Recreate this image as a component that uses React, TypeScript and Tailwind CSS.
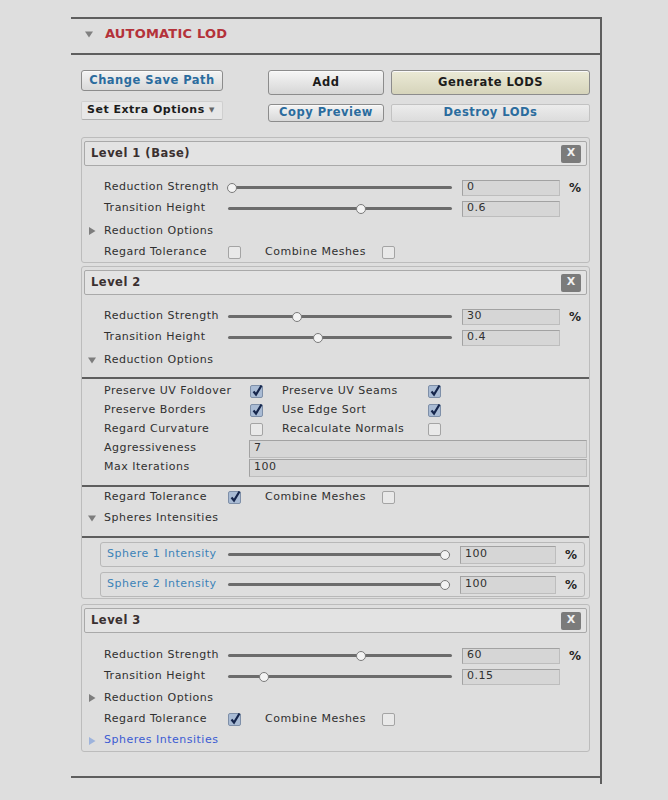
import React from 'react'

// Inspector panel for the automatic LOD generator

function Caret({ open, color = '#7d7d7d' }: { open?: boolean; color?: string }) {
  return (
    <svg width="8" height="8" viewBox="0 0 8 8" className="shrink-0">
      {open ? <path d="M0 1.5h8L4 7.5z" fill={color} /> : <path d="M1 0v8l6.5-4z" fill={color} />}
    </svg>
  )
}

function Check({ on }: { on?: boolean }) {
  if (!on) return <span className="h-[13px] w-[13px] shrink-0 rounded-[2px] border border-[#a4a4a4] bg-[#e9e9e9]" />
  return (
    <span className="relative flex h-[13px] w-[13px] shrink-0 items-center justify-center rounded-[2px] border border-[#7e8fa8] bg-[#a9bbd4]">
      <svg width="12" height="13" viewBox="0 0 12 13" className="absolute -top-[2px] left-0">
        <path d="M2.5 7.5l2.5 3L10.5 1.5" fill="none" stroke="#16264c" strokeWidth="2.2" />
      </svg>
    </span>
  )
}

function Field({ value, className = '' }: { value: string; className?: string }) {
  return (
    <div className={`flex items-center border border-[#a2a2a2] border-b-[#bdbdbd] border-r-[#bdbdbd] bg-[#d6d6d6] pl-[4px] text-[#303030] ${className}`}>
      {value}
    </div>
  )
}

function Slider({ pos, w = 224, travel = 215 }: { pos: number; w?: number; travel?: number }) {
  return (
    <div className="relative flex h-[12px] shrink-0 items-center" style={{ width: w }}>
      <div className="h-[3px] w-full rounded-full bg-[#6c6c6c]" />
      <div
        className="absolute top-[1px] h-[10px] w-[10px] rounded-full border border-[#7a7a7a] bg-[#f3f3f3]"
        style={{ left: 4 + pos * travel - 5 }}
      />
    </div>
  )
}

function SliderRow({ label, pos, value, pct, className = 'h-[21px]' }: { label: string; pos: number; value: string; pct?: boolean; className?: string }) {
  return (
    <div className={`flex items-center ${className}`}>
      <span className="w-[124px] shrink-0">{label}</span>
      <Slider pos={pos} />
      <Field value={value} className="ml-[10px] h-[16px] w-[98px]" />
      {pct && <span className="ml-[9px] text-[12px] font-bold text-[#222]">%</span>}
    </div>
  )
}

function Foldout({ label, open, link, className = 'h-[22px]' }: { label: string; open?: boolean; link?: boolean; className?: string }) {
  return (
    <div className={`-ml-[16px] flex items-center gap-[8px] ${className}`}>
      <Caret open={open} color={link ? '#9db3dc' : '#7d7d7d'} />
      <span className={link ? 'text-[#3b5bd3]' : ''}>{label}</span>
    </div>
  )
}

function ToggleRow({ tolerance, className = 'h-[20px]' }: { tolerance?: boolean; className?: string }) {
  return (
    <div className={`flex items-center ${className}`}>
      <span className="w-[124px]">Regard Tolerance</span>
      <Check on={tolerance} />
      <span className="ml-[24px] w-[117px]">Combine Meshes</span>
      <Check />
    </div>
  )
}

function LevelHeader({ title }: { title: string }) {
  return (
    <div className="mx-[2px] flex h-[25px] items-center justify-between rounded-[2px] border border-[#a9a9a9] bg-[#e3e3e3] pl-[6px] pr-[5px]">
      <span className="text-[11.5px] font-bold text-[#3a3030]">{title}</span>
      <span className="flex h-[18px] w-[20px] items-center justify-center rounded-[2px] bg-[#7b7b7b] text-[11px] font-bold tracking-normal text-[#f0f0f0]">X</span>
    </div>
  )
}

function Level({ children, className = '' }: { children: React.ReactNode; className?: string }) {
  return <div className={`rounded-[3px] border border-[#bcbcbc] pt-[3px] ${className}`}>{children}</div>
}

function OptionRow({ a, aOn, b, bOn, className = 'h-[19px]' }: { a: string; aOn?: boolean; b: string; bOn?: boolean; className?: string }) {
  return (
    <div className={`flex items-center ${className}`}>
      <span className="w-[146px]">{a}</span>
      <Check on={aOn} />
      <span className="ml-[19px] w-[146px]">{b}</span>
      <Check on={bOn} />
    </div>
  )
}

function SphereRow({ label, className = '' }: { label: string; className?: string }) {
  return (
    <div className={`ml-[18px] mr-[4px] flex h-[25px] items-center rounded-[3px] border border-[#b8b8b8] pl-[6px] ${className}`}>
      <span className="w-[121px] text-[#3c82b8]">{label}</span>
      <Slider pos={1} w={222} travel={213} />
      <Field value="100" className="ml-[10px] h-[18px] w-[96px]" />
      <span className="ml-[9px] text-[12px] font-bold text-[#222]">%</span>
    </div>
  )
}

const btn = 'flex items-center justify-center whitespace-nowrap rounded-[3px] border border-[#8c8c8c] text-[11.5px] font-bold shadow-[inset_0_1px_0_#fafafa]'

export default function App() {
  return (
    <div className="min-h-[800px] bg-[#dedede] pt-[17px] font-['DejaVu_Sans',Verdana,sans-serif] text-[11px] tracking-[0.5px] text-[#303030]">
      <div className="ml-[71px] w-[531px] border-r-2 border-t-2 border-[#5e5e5e] pb-[6px]">
        <div className="border-b-2 border-[#5e5e5e] pb-[24px]">
          {/* panel title */}
          <div className="flex h-[36px] items-center gap-[12px] border-b-2 border-[#5e5e5e] pb-[4px] pl-[14px]">
            <Caret open color="#808080" />
            <span className="text-[13px] font-bold tracking-[0.2px] text-[#b4323a]">AUTOMATIC LOD</span>
          </div>

          <div className="pl-[10px] pr-[10px]">
            {/* toolbar */}
            <div className="flex pt-[15px]">
              <div className="flex w-[142px] flex-col">
                <div className={`${btn} h-[21px] bg-gradient-to-b from-[#f4f4f4] to-[#d9d9d9] text-[#2b6c9e]`}>Change Save Path</div>
                <div className="mt-[10px] flex h-[19px] items-center justify-between whitespace-nowrap rounded-[2px] border border-[#cfcfcf] border-b-[#b0b0b0] bg-[#e7e7e7] pl-[5px] pr-[7px] font-bold text-[#1c1c1c]">
                  <span>Set Extra Options</span>
                  <span className="text-[7px] text-[#666]">▼</span>
                </div>
              </div>
              <div className="ml-[45px] flex flex-1 flex-col">
                <div className="flex gap-[7px]">
                  <div className={`${btn} h-[25px] w-[116px] bg-gradient-to-b from-[#f6f6f6] to-[#d6d6d6] text-[#1c1c1c]`}>Add</div>
                  <div className={`${btn} h-[25px] flex-1 bg-gradient-to-b from-[#ebead6] to-[#d6d4bb] text-[#1c1c1c] shadow-[inset_0_1px_0_#f6f5e6]`}>Generate LODS</div>
                </div>
                <div className="mt-[9px] flex gap-[7px]">
                  <div className={`${btn} h-[18px] w-[116px] bg-gradient-to-b from-[#f4f4f4] to-[#d9d9d9] text-[#2b6c9e]`}>Copy Preview</div>
                  <div className="flex h-[18px] flex-1 items-center justify-center rounded-[2px] border border-[#c2c2c2] bg-gradient-to-b from-[#ececec] to-[#dcdcdc] text-[11.5px] font-bold text-[#2b6c9e]">Destroy LODs</div>
                </div>
              </div>
            </div>

            {/* level 1 */}
            <Level className="mt-[15px]">
              <LevelHeader title="Level 1 (Base)" />
              <div className="pl-[22px] pt-[11px]">
                <SliderRow label="Reduction Strength" pos={0} value="0" pct />
                <SliderRow label="Transition Height" pos={0.6} value="0.6" />
                <Foldout label="Reduction Options" className="mt-[1px] h-[22px]" />
                <ToggleRow />
              </div>
            </Level>

            {/* level 2 */}
            <Level className="mt-[3px]">
              <LevelHeader title="Level 2" />
              <div className="pl-[22px] pt-[11px]">
                <SliderRow label="Reduction Strength" pos={0.3} value="30" pct />
                <SliderRow label="Transition Height" pos={0.4} value="0.4" />
                <Foldout label="Reduction Options" open className="mt-[1px] h-[22px]" />
              </div>
              <div className="mt-[6px] border-t-2 border-[#5e5e5e] pl-[22px] pt-[2px]">
                <OptionRow a="Preserve UV Foldover" aOn b="Preserve UV Seams" bOn className="h-[20px]" />
                <OptionRow a="Preserve Borders" aOn b="Use Edge Sort" bOn />
                <OptionRow a="Regard Curvature" b="Recalculate Normals" />
                <div className="flex h-[19px] items-center">
                  <span className="w-[145px] shrink-0">Aggressiveness</span>
                  <Field value="7" className="mr-[2px] h-[18px] flex-1" />
                </div>
                <div className="flex h-[19px] items-center">
                  <span className="w-[145px] shrink-0">Max Iterations</span>
                  <Field value="100" className="mr-[2px] h-[18px] flex-1" />
                </div>
              </div>
              <div className="mt-[8px] border-t-2 border-[#5e5e5e] pl-[22px]">
                <ToggleRow tolerance className="h-[20px]" />
                <Foldout label="Spheres Intensities" open className="h-[22px]" />
              </div>
              <div className="mt-[7px] border-t-2 border-[#5e5e5e] pb-[1px] pt-[4px]">
                <SphereRow label="Sphere 1 Intensity" className="h-[24px]" />
                <SphereRow label="Sphere 2 Intensity" className="mt-[5px]" />
              </div>
            </Level>

            {/* level 3 */}
            <Level className="mt-[5px]">
              <LevelHeader title="Level 3" />
              <div className="pl-[22px] pt-[12px]">
                <SliderRow label="Reduction Strength" pos={0.6} value="60" pct />
                <SliderRow label="Transition Height" pos={0.15} value="0.15" />
                <Foldout label="Reduction Options" className="h-[22px]" />
                <ToggleRow tolerance className="h-[21px]" />
                <Foldout label="Spheres Intensities" link className="h-[21px]" />
              </div>
            </Level>
          </div>
        </div>
      </div>
    </div>
  )
}
